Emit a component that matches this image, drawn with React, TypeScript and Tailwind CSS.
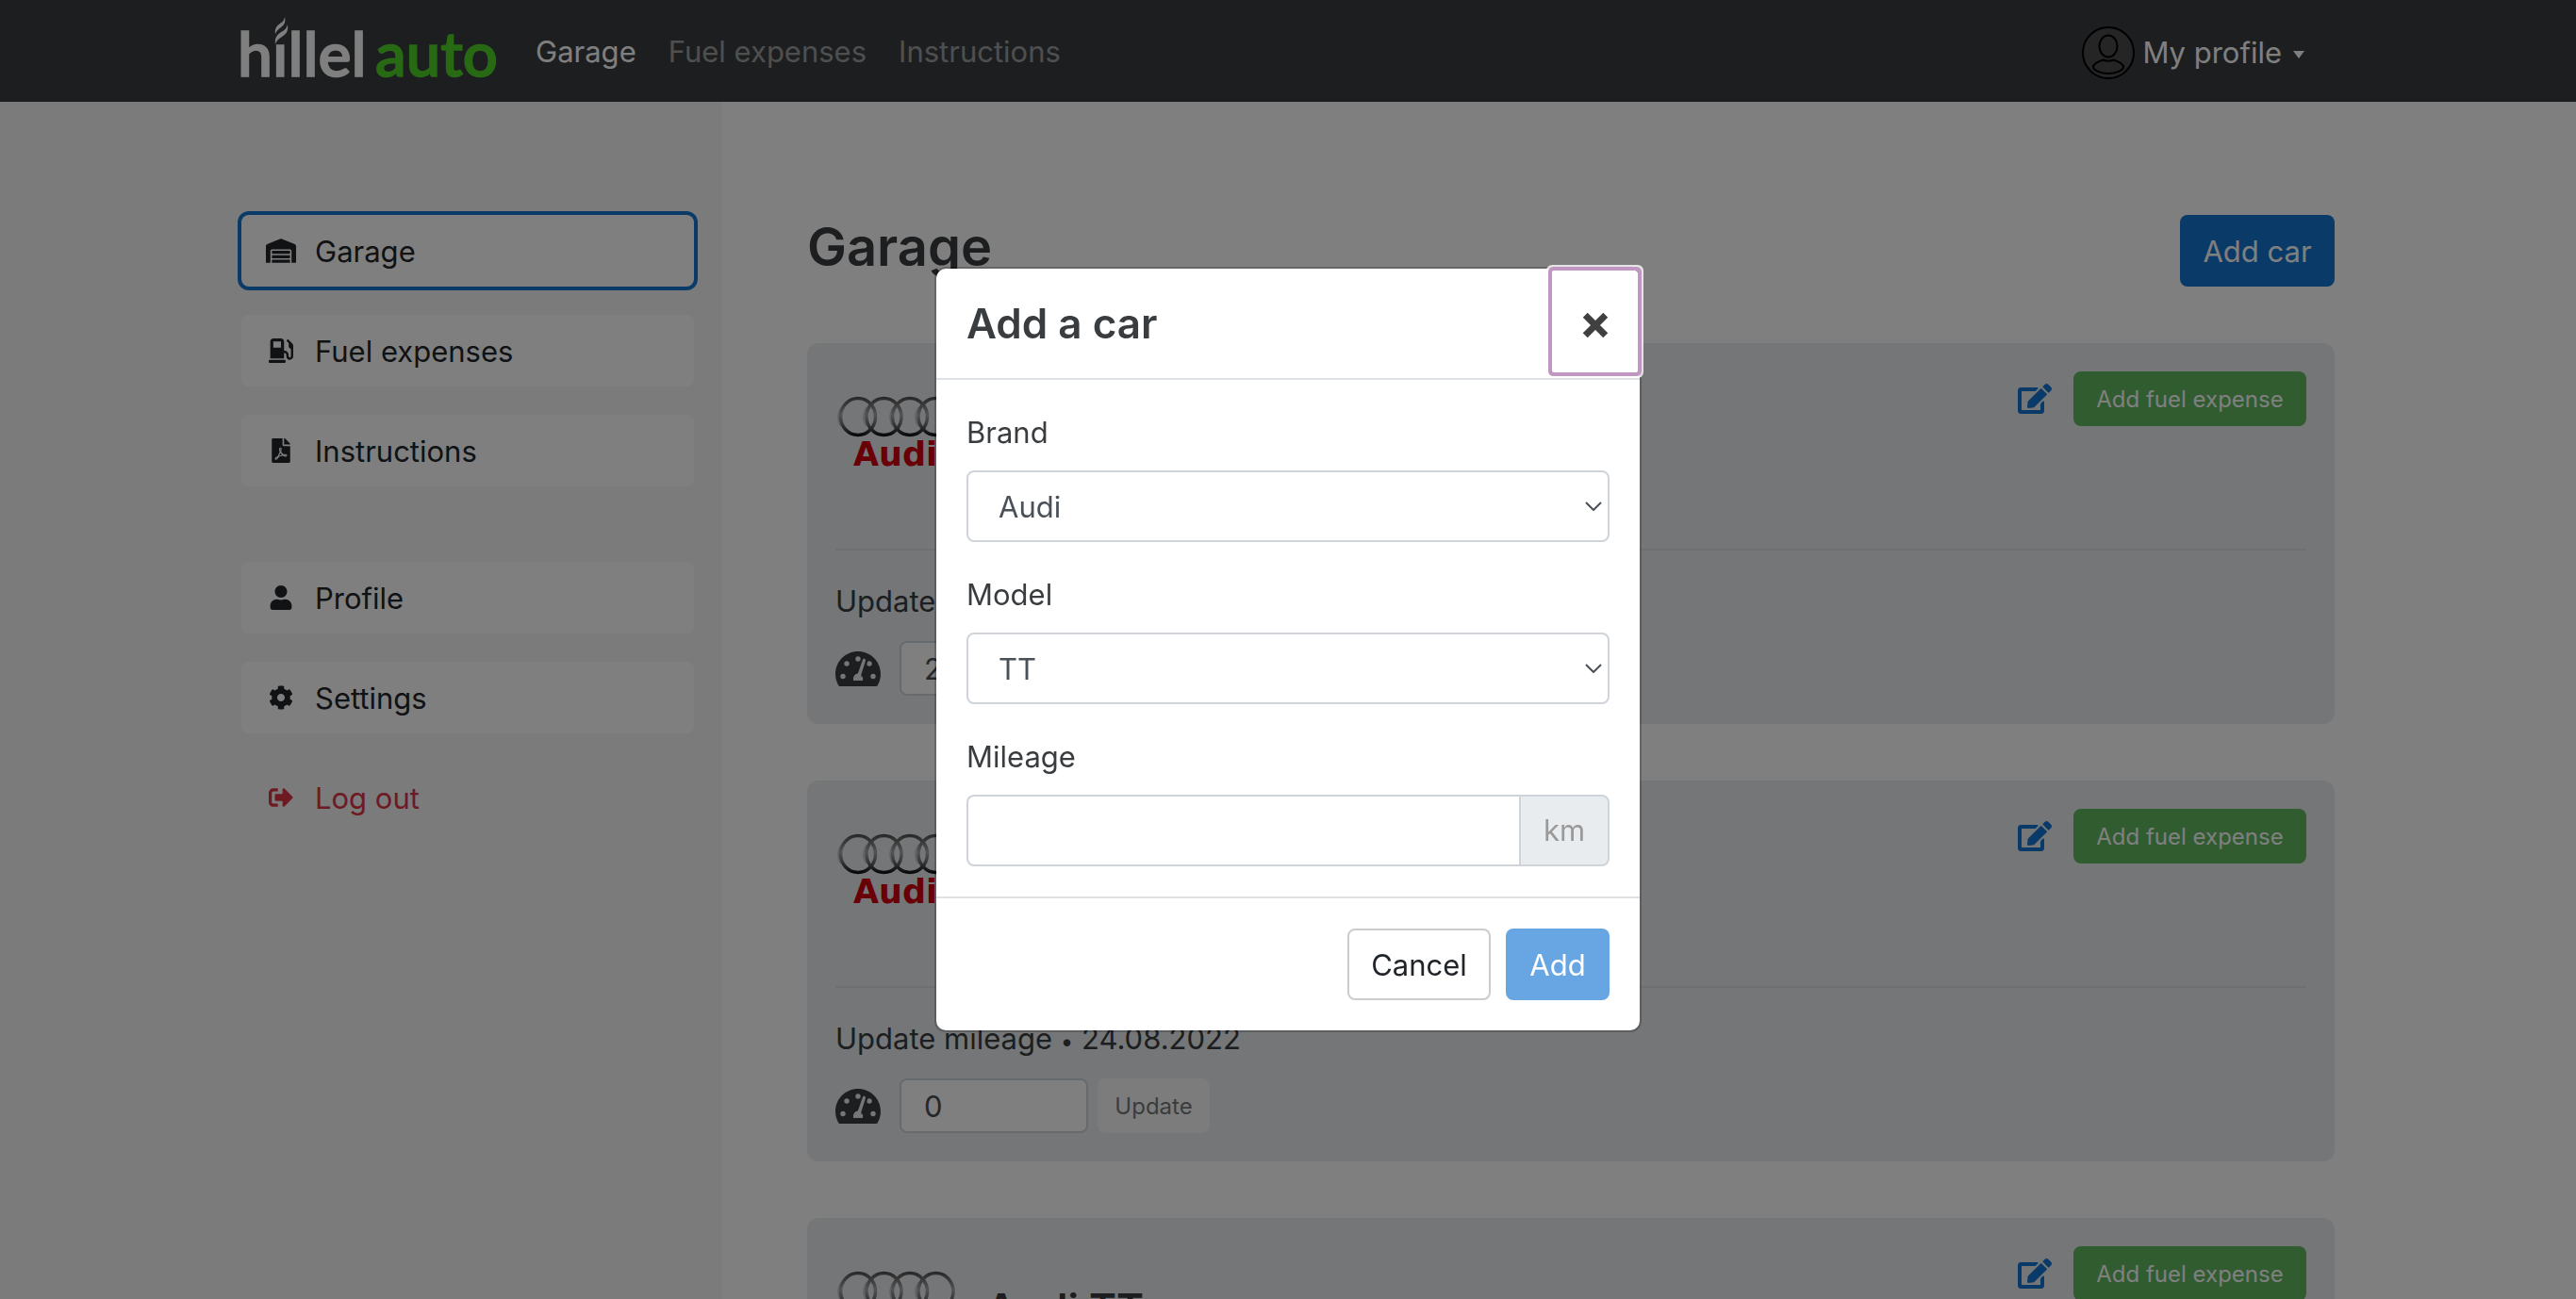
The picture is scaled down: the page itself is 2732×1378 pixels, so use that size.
import type { ReactNode } from "react";
import { FaCog, FaEdit, FaFilePdf, FaGasPump, FaSignOutAlt, FaUser, FaWarehouse } from "react-icons/fa";

function Logo() {
  return (
    <svg viewBox="0 0 276 76" className="h-[76px] w-[276px] overflow-visible" role="img" aria-label="hillel auto">
      <text x="-4" y="65" fontFamily="Lato, sans-serif" fontWeight="600" fontSize="66" fill="#fff" stroke="#fff" strokeWidth="1.500">
        hıllel
      </text>
      <text x="142" y="65" fontFamily="Lato, sans-serif" fontWeight="600" fontSize="65" fill="#50d428" stroke="#50d428" strokeWidth="1.500">
        auto
      </text>
      <path d="M36 20c-1-6 2-9 5-11 3-2 4-3 5-7 1 5 0 8-4 11-3 2-5 4-6 7z" fill="#fff" />
      <path d="M36 31c-1-7 2-10 6-13 4-2 6-4 7-8 1 6-1 10-6 13-3 2-6 4-7 8z" fill="#fff" />
    </svg>
  );
}

function Avatar() {
  return (
    <svg viewBox="0 0 56 56" className="size-14" fill="#4a4a4a" stroke="#000" strokeWidth="2" aria-hidden="true">
      <circle cx="28" cy="28" r="27" />
      <ellipse cx="28" cy="21" rx="9.5" ry="11.5" />
      <path d="M22.500 35.500C18 37 12 40 12 43c0 3 7 7 16 7s16-4 16-7c0-3-6-6-10.500-7.500-3.500 1.500-7.500 1.500-11 0z" />
    </svg>
  );
}

function Speedometer() {
  return (
    <svg viewBox="0 0 48 37" className="h-[37px] w-12" aria-hidden="true">
      <path d="M24 0C10.700 0 0 10.700 0 24c0 4.300 1 8 3 11.500.5 1 1.200 1.500 2.200 1.500h37.600c1 0 1.700-.5 2.200-1.500 2-3.500 3-7.200 3-11.500C48 10.700 37.300 0 24 0z" fill="#3a3d3f" />
      <g fill="#e9ecef">
        <circle cx="24" cy="8" r="2.700" />
        <circle cx="12" cy="13" r="2.700" />
        <circle cx="8" cy="26.500" r="2.700" />
        <circle cx="40" cy="26.500" r="2.700" />
        <circle cx="36" cy="13" r="2.700" />
        <path d="M30.500 7.800c1.200.3 1.800 1.200 1.400 2.400l-4.600 14.600c1.800 1.300 2.300 3.700 1.600 6.200h-9.800c-.7-3.800 1.200-7 4.700-7.400l5-14.400c.3-1 .9-1.500 1.700-1.400z" />
      </g>
      <path d="M34.500 6.500L28 27" stroke="#3a3d3f" strokeWidth="1.500" />
    </svg>
  );
}

function AudiLogo() {
  return (
    <svg viewBox="0 0 136 84" className="h-[84px] w-[136px] overflow-visible" role="img" aria-label="Audi">
      <defs>
        <linearGradient id="ring" x1="0" y1="0" x2="0" y2="1">
          <stop offset="0" stopColor="#555" />
          <stop offset="0.45" stopColor="#a8a8a8" />
          <stop offset="0.75" stopColor="#666" />
          <stop offset="1" stopColor="#151515" />
        </linearGradient>
      </defs>
      <g fill="none" stroke="#c4c6c8" strokeWidth="2">
        <path d="M7 18a17 17 0 0 0-1 20M34 18a17 17 0 0 0-1 20M62 18a17 17 0 0 0-1 20M89 18a17 17 0 0 0-1 20" />
      </g>
      <g fill="none" stroke="url(#ring)" strokeWidth="3.500">
        <ellipse cx="24" cy="28" rx="18.500" ry="19.500" />
        <ellipse cx="51.500" cy="28" rx="18.500" ry="19.500" />
        <ellipse cx="79" cy="28" rx="18.500" ry="19.500" />
        <ellipse cx="106.500" cy="28" rx="18.500" ry="19.500" />
      </g>
      <text x="19" y="80" fontFamily="'DejaVu Sans', sans-serif" fontWeight="700" fontSize="35" fill="#d3000f">
        Audi
      </text>
    </svg>
  );
}

function SideItem({ icon, label, tone = "normal" }: { icon: ReactNode; label: string; tone?: "normal" | "active" | "danger" }) {
  const styles = {
    normal: "bg-white text-[#212529]",
    active: "bg-white text-[#212529] ring-4 ring-[#1475d0]",
    danger: "text-[#dc3545]",
  };
  return (
    <a href="#" className={`flex h-[76px] items-center gap-5 rounded-lg px-[26px] ${styles[tone]}`}>
      <span className="flex w-8 justify-center text-[26px]">{icon}</span>
      <span className="pt-[2px]">{label}</span>
    </a>
  );
}

function CarCard({ id, mileage }: { id: number; mileage: string }) {
  return (
    <li className="rounded-xl bg-[#e9ecef] p-[30px]">
      <div className="flex h-[188px] items-start">
        <div className="pt-5">
          <AudiLogo />
        </div>
        <h2 className="ml-6 pt-10 text-[44px] leading-[52px] font-semibold">Audi TT</h2>
        <button aria-label="Edit car" className="ml-auto flex h-[58px] items-center text-[#1475d0]">
          <FaEdit className="h-8 w-9" />
        </button>
        <button className="ml-[23px] h-[58px] w-[247px] rounded-lg bg-[#60b860] pt-[2px] text-2xl text-white">Add fuel expense</button>
      </div>
      <div className="border-t-2 border-black/5 pt-[30px]">
        <label htmlFor={`mileage-${id}`} className="block leading-12">
          Update mileage <span className="text-2xl">•</span> 24.08.2022
        </label>
        <div className="mt-[18px] flex items-center">
          <Speedometer />
          <input
            id={`mileage-${id}`}
            defaultValue={mileage}
            className="ml-5 h-[58px] w-[200px] rounded-lg border-2 border-[#ced4da] bg-white px-6 text-[#495057]"
          />
          <button className="ml-[10px] h-[58px] w-[119px] rounded-lg bg-[#f8f8f8] pt-[2px] text-2xl text-[#77797b]">Update</button>
        </div>
      </div>
    </li>
  );
}

function SelectField({ id, label, value }: { id: string; label: string; value: string }) {
  return (
    <div>
      <label htmlFor={id} className="block leading-12">
        {label}
      </label>
      <div className="relative mt-4">
        <select
          id={id}
          defaultValue={value}
          className="h-[76px] w-full appearance-none rounded-lg border-2 border-[#ced4da] bg-white px-8 pt-[2px] text-[#495057]"
        >
          <option>{value}</option>
        </select>
        <svg viewBox="0 0 18 10" className="pointer-events-none absolute top-[33px] right-2 h-[10px] w-[18px]" fill="none" stroke="#495057" strokeWidth="2" aria-hidden="true">
          <path d="M1 1l8 8 8-8" />
        </svg>
      </div>
    </div>
  );
}

function AddCarModal() {
  return (
    <div className="fixed inset-0 flex items-center justify-center bg-black/50">
      <div role="dialog" aria-modal="true" aria-labelledby="modal-title" className="w-[750px] rounded-xl border-2 border-black/20 bg-white bg-clip-padding">
        <div className="flex items-stretch justify-between border-b-2 border-[#dee2e6] pl-8">
          <h4 id="modal-title" className="py-8 text-[44px] leading-[52px] font-semibold">
            Add a car
          </h4>
          <button
            aria-label="Close"
            className="mt-[2px] mr-[2px] mb-[6px] flex w-[91px] items-center justify-center rounded-xs text-[#404040] shadow-[0_0_0_4px_#c097c2,0_0_0_6px_#ffffffcc]"
          >
            <svg viewBox="0 0 26 26" className="mt-2 size-7" stroke="currentColor" strokeWidth="6.500" aria-hidden="true">
              <path d="M3 3l20 20M23 3L3 23" />
            </svg>
          </button>
        </div>
        <form className="flex flex-col gap-8 p-8">
          <SelectField id="brand" label="Brand" value="Audi" />
          <SelectField id="model" label="Model" value="TT" />
          <div>
            <label htmlFor="mileage" className="block leading-12">
              Mileage
            </label>
            <div className="mt-4 flex h-[76px]">
              <input id="mileage" className="min-w-0 flex-1 rounded-l-lg border-2 border-r-0 border-[#ced4da] bg-white px-6 text-[#495057]" />
              <span className="flex w-24 items-center justify-center rounded-r-lg border-2 border-[#ced4da] bg-[#e9ecef] text-[#999]">km</span>
            </div>
          </div>
        </form>
        <div className="flex justify-end gap-4 border-t-2 border-[#dee2e6] p-8">
          <button className="h-[76px] w-[152px] rounded-lg border-2 border-[#ccc] bg-white pt-[2px] text-[#212529]">Cancel</button>
          <button disabled className="h-[76px] w-[110px] rounded-lg bg-[#68a6e3] pt-[2px] text-white">
            Add
          </button>
        </div>
      </div>
    </div>
  );
}

export default function App() {
  return (
    <div className="h-screen overflow-hidden bg-white font-['Inter',sans-serif] text-[31px] leading-12 text-[#3a3d3f]">
      <header className="h-[108px] bg-[#3a3d3f] text-white">
        <div className="mx-auto flex h-full max-w-[2280px] items-center px-[30px]">
          <a href="#">
            <Logo />
          </a>
          <nav className="ml-9 flex gap-[34px] pt-[2px]">
            <a href="#">Garage</a>
            <a href="#" className="text-white/50">
              Fuel expenses
            </a>
            <a href="#" className="text-white/50">
              Instructions
            </a>
          </nav>
          <button className="mr-8 ml-auto flex items-center pt-[3px]">
            <Avatar />
            <span className="ml-2">My profile</span>
            <svg viewBox="0 0 12 8" className="mt-1 ml-3 h-2 w-3" fill="#fff" aria-hidden="true">
              <path d="M0 0h12L6 8z" />
            </svg>
          </button>
        </div>
      </header>
      <div className="flex min-h-full">
        <aside className="w-[calc(50%-600px)] bg-[#f7f7f7] pt-[120px] pr-[30px]">
          <nav className="ml-auto flex max-w-[480px] flex-col gap-20">
            <div className="flex flex-col gap-[30px]">
              <SideItem tone="active" icon={<FaWarehouse className="h-[26px] w-8" />} label="Garage" />
              <SideItem icon={<FaGasPump />} label="Fuel expenses" />
              <SideItem icon={<FaFilePdf />} label="Instructions" />
            </div>
            <div className="flex flex-col gap-[30px]">
              <SideItem icon={<FaUser />} label="Profile" />
              <SideItem icon={<FaCog />} label="Settings" />
              <SideItem tone="danger" icon={<FaSignOutAlt />} label="Log out" />
            </div>
          </nav>
        </aside>
        <main className="flex-1 pt-[120px] pl-[90px]">
          <div className="max-w-[1620px]">
            <div className="flex h-[76px] items-start justify-between">
              <h1 className="text-[56px] leading-[68px] font-semibold">Garage</h1>
              <button className="h-[76px] w-[164px] rounded-lg bg-[#1475d0] pt-[2px] text-white">Add car</button>
            </div>
            <ul className="mt-[60px] flex flex-col gap-[60px]">
              <CarCard id={1} mileage="2" />
              <CarCard id={2} mileage="0" />
              <CarCard id={3} mileage="0" />
            </ul>
          </div>
        </main>
      </div>
      <AddCarModal />
    </div>
  );
}
